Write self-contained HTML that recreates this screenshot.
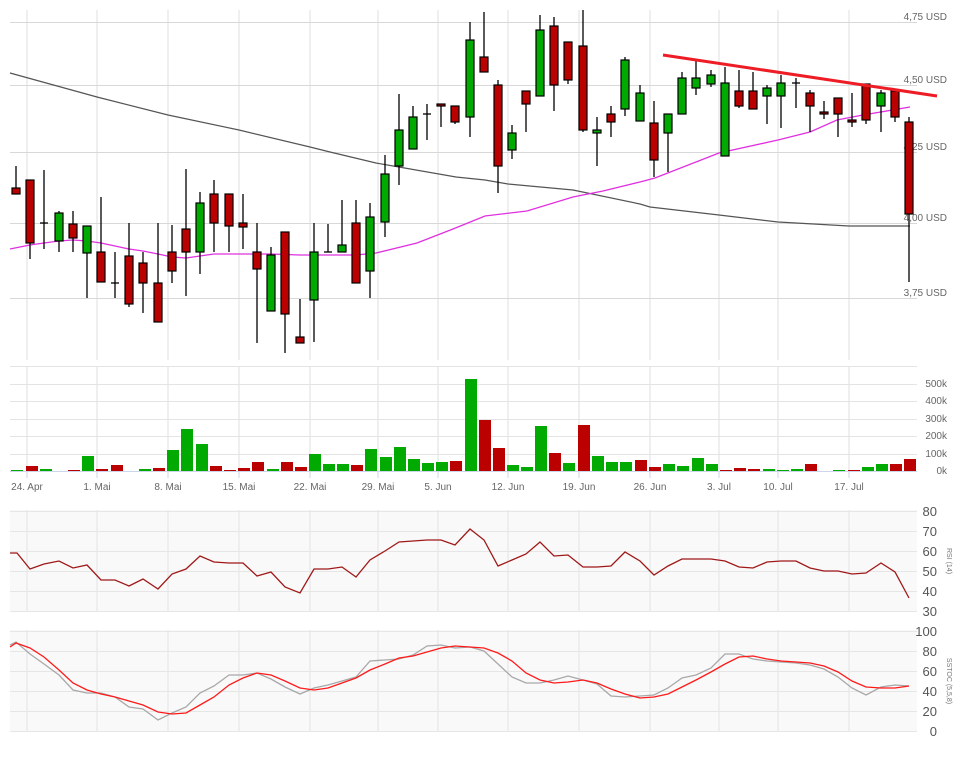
<!DOCTYPE html>
<html><head><meta charset="utf-8"><style>
html,body{margin:0;padding:0;background:#fff;}
svg{display:block;font-family:"Liberation Sans",sans-serif;}
</style></head><body>
<svg width="968" height="765" viewBox="0 0 968 765" xmlns="http://www.w3.org/2000/svg">
<!-- main panel grid -->
<g stroke="#efefef" stroke-width="2">
<line x1="27" y1="10" x2="27" y2="360"/><line x1="97" y1="10" x2="97" y2="360"/><line x1="168" y1="10" x2="168" y2="360"/><line x1="239" y1="10" x2="239" y2="360"/><line x1="310" y1="10" x2="310" y2="360"/><line x1="378" y1="10" x2="378" y2="360"/><line x1="438" y1="10" x2="438" y2="360"/><line x1="508" y1="10" x2="508" y2="360"/><line x1="579" y1="10" x2="579" y2="360"/><line x1="650" y1="10" x2="650" y2="360"/><line x1="719" y1="10" x2="719" y2="360"/><line x1="778" y1="10" x2="778" y2="360"/><line x1="849" y1="10" x2="849" y2="360"/>
</g>
<g stroke="#d8d8d8" stroke-width="1">
<line x1="10" y1="22.5" x2="917" y2="22.5"/><line x1="10" y1="85.5" x2="917" y2="85.5"/><line x1="10" y1="152.5" x2="917" y2="152.5"/><line x1="10" y1="223.5" x2="917" y2="223.5"/><line x1="10" y1="298.5" x2="917" y2="298.5"/>
</g>
<g font-size="10" fill="#666" text-anchor="end">
<text x="947" y="20">4,75 USD</text><text x="947" y="83">4,50 USD</text><text x="947" y="150">4,25 USD</text><text x="947" y="221">4,00 USD</text><text x="947" y="296">3,75 USD</text>
</g>
<!-- moving averages -->
<polyline fill="none" stroke="#555" stroke-width="1.2" points="10,73 97,97 168,115 239,130 310,147 330,152 376,163 456,177 485,180 508,184 573,190 640,204 650,207 719,215 778,222 849,226 910,226"/>
<polyline fill="none" stroke="#e030e0" stroke-width="1.3" points="10,249 30,245 44,243 59,241 73,240 87,241 101,243 115,246 129,249 143,251 158,254 172,257 186,258 200,256 214,254 243,254 271,254 300,255 328,255 356,255 376,253 417,243 453,229 485,216 527,211 573,197 603,191 640,182 655,178 719,153 778,140 810,132 837,120 863,115 910,107"/>
<!-- candles -->
<g stroke="#000" stroke-width="1.3">
<line x1="16" y1="166" x2="16" y2="194"/><line x1="30" y1="180" x2="30" y2="259"/><line x1="44" y1="170" x2="44" y2="249"/><line x1="59" y1="211" x2="59" y2="252"/><line x1="73" y1="211" x2="73" y2="252"/><line x1="87" y1="226" x2="87" y2="298"/><line x1="101" y1="197" x2="101" y2="282"/><line x1="115" y1="252" x2="115" y2="298"/><line x1="129" y1="223" x2="129" y2="307"/><line x1="143" y1="252" x2="143" y2="313"/><line x1="158" y1="223" x2="158" y2="322"/><line x1="172" y1="225" x2="172" y2="283"/><line x1="186" y1="169" x2="186" y2="296"/><line x1="200" y1="192" x2="200" y2="274"/><line x1="214" y1="180" x2="214" y2="252"/><line x1="229" y1="194" x2="229" y2="252"/><line x1="243" y1="194" x2="243" y2="249"/><line x1="257" y1="223" x2="257" y2="343"/><line x1="271" y1="247" x2="271" y2="311"/><line x1="285" y1="232" x2="285" y2="353"/><line x1="300" y1="299" x2="300" y2="343"/><line x1="314" y1="223" x2="314" y2="342"/><line x1="328" y1="224" x2="328" y2="252"/><line x1="342" y1="200" x2="342" y2="252"/><line x1="356" y1="200" x2="356" y2="283"/><line x1="370" y1="203" x2="370" y2="298"/><line x1="385" y1="155" x2="385" y2="237"/><line x1="399" y1="94" x2="399" y2="185"/><line x1="413" y1="106" x2="413" y2="149"/><line x1="427" y1="104" x2="427" y2="140"/><line x1="441" y1="104" x2="441" y2="127"/><line x1="455" y1="106" x2="455" y2="124"/><line x1="470" y1="22" x2="470" y2="137"/><line x1="484" y1="12" x2="484" y2="72"/><line x1="498" y1="80" x2="498" y2="193"/><line x1="512" y1="125" x2="512" y2="159"/><line x1="526" y1="91" x2="526" y2="132"/><line x1="540" y1="15" x2="540" y2="96"/><line x1="554" y1="17" x2="554" y2="111"/><line x1="568" y1="42" x2="568" y2="84"/><line x1="583" y1="10" x2="583" y2="132"/><line x1="597" y1="117" x2="597" y2="166"/><line x1="611" y1="106" x2="611" y2="137"/><line x1="625" y1="57" x2="625" y2="116"/><line x1="640" y1="85" x2="640" y2="121"/><line x1="654" y1="101" x2="654" y2="177"/><line x1="668" y1="114" x2="668" y2="172"/><line x1="682" y1="72" x2="682" y2="114"/><line x1="696" y1="61" x2="696" y2="95"/><line x1="711" y1="70" x2="711" y2="87"/><line x1="725" y1="67" x2="725" y2="156"/><line x1="739" y1="70" x2="739" y2="108"/><line x1="753" y1="72" x2="753" y2="109"/><line x1="767" y1="85" x2="767" y2="124"/><line x1="781" y1="75" x2="781" y2="128"/><line x1="796" y1="78" x2="796" y2="108"/><line x1="810" y1="90" x2="810" y2="132"/><line x1="824" y1="101" x2="824" y2="119"/><line x1="838" y1="98" x2="838" y2="137"/><line x1="852" y1="93" x2="852" y2="127"/><line x1="866" y1="84" x2="866" y2="124"/><line x1="881" y1="90" x2="881" y2="132"/><line x1="895" y1="91" x2="895" y2="122"/><line x1="909" y1="117" x2="909" y2="282"/>
<line x1="111" y1="283" x2="119" y2="283"/><line x1="40" y1="223" x2="48" y2="223"/><line x1="324" y1="252" x2="332" y2="252"/><line x1="423" y1="114" x2="431" y2="114"/><line x1="792" y1="83" x2="800" y2="83"/>
</g>
<g stroke="#000" stroke-width="1.2">
<g fill="#bb0000">
<rect x="12" y="188" width="8" height="6"/><rect x="26" y="180" width="8" height="63"/><rect x="69" y="224" width="8" height="14"/><rect x="97" y="252" width="8" height="30"/><rect x="125" y="256" width="8" height="48"/><rect x="139" y="263" width="8" height="20"/><rect x="154" y="283" width="8" height="39"/><rect x="168" y="252" width="8" height="19"/><rect x="182" y="229" width="8" height="23"/><rect x="210" y="194" width="8" height="29"/><rect x="225" y="194" width="8" height="32"/><rect x="239" y="223" width="8" height="4"/><rect x="253" y="252" width="8" height="17"/><rect x="281" y="232" width="8" height="82"/><rect x="296" y="337" width="8" height="6"/><rect x="352" y="223" width="8" height="60"/><rect x="437" y="104" width="8" height="2"/><rect x="451" y="106" width="8" height="16"/><rect x="480" y="57" width="8" height="15"/><rect x="494" y="85" width="8" height="81"/><rect x="522" y="91" width="8" height="13"/><rect x="550" y="26" width="8" height="59"/><rect x="564" y="42" width="8" height="38"/><rect x="579" y="46" width="8" height="84"/><rect x="607" y="114" width="8" height="8"/><rect x="650" y="123" width="8" height="37"/><rect x="735" y="91" width="8" height="15"/><rect x="749" y="91" width="8" height="18"/><rect x="806" y="93" width="8" height="13"/><rect x="820" y="112" width="8" height="2"/><rect x="834" y="98" width="8" height="16"/><rect x="848" y="120" width="8" height="2"/><rect x="862" y="84" width="8" height="36"/><rect x="891" y="91" width="8" height="26"/><rect x="905" y="122" width="8" height="92"/>
</g>
<g fill="#00aa00">
<rect x="55" y="213" width="8" height="28"/><rect x="83" y="226" width="8" height="27"/><rect x="196" y="203" width="8" height="49"/><rect x="267" y="255" width="8" height="56"/><rect x="310" y="252" width="8" height="48"/><rect x="338" y="245" width="8" height="7"/><rect x="366" y="217" width="8" height="54"/><rect x="381" y="174" width="8" height="48"/><rect x="395" y="130" width="8" height="36"/><rect x="409" y="117" width="8" height="32"/><rect x="466" y="40" width="8" height="77"/><rect x="508" y="133" width="8" height="17"/><rect x="536" y="30" width="8" height="66"/><rect x="593" y="130" width="8" height="3"/><rect x="621" y="60" width="8" height="49"/><rect x="636" y="93" width="8" height="28"/><rect x="664" y="114" width="8" height="19"/><rect x="678" y="78" width="8" height="36"/><rect x="692" y="78" width="8" height="10"/><rect x="707" y="75" width="8" height="9"/><rect x="721" y="83" width="8" height="73"/><rect x="763" y="88" width="8" height="8"/><rect x="777" y="83" width="8" height="13"/><rect x="877" y="93" width="8" height="13"/>
</g>
</g>
<line x1="663" y1="55" x2="937" y2="96" stroke="#ee1c25" stroke-width="3"/>
<!-- volume panel -->
<g stroke="#efefef" stroke-width="2">
<line x1="27" y1="366" x2="27" y2="471"/><line x1="97" y1="366" x2="97" y2="471"/><line x1="168" y1="366" x2="168" y2="471"/><line x1="239" y1="366" x2="239" y2="471"/><line x1="310" y1="366" x2="310" y2="471"/><line x1="378" y1="366" x2="378" y2="471"/><line x1="438" y1="366" x2="438" y2="471"/><line x1="508" y1="366" x2="508" y2="471"/><line x1="579" y1="366" x2="579" y2="471"/><line x1="650" y1="366" x2="650" y2="471"/><line x1="719" y1="366" x2="719" y2="471"/><line x1="778" y1="366" x2="778" y2="471"/><line x1="849" y1="366" x2="849" y2="471"/>
</g>
<g stroke="#e4e4e4" stroke-width="1">
<line x1="10" y1="366.5" x2="917" y2="366.5"/><line x1="10" y1="384.5" x2="917" y2="384.5"/><line x1="10" y1="401.5" x2="917" y2="401.5"/><line x1="10" y1="419.5" x2="917" y2="419.5"/><line x1="10" y1="436.5" x2="917" y2="436.5"/><line x1="10" y1="454.5" x2="917" y2="454.5"/>
</g>
<g fill="#00aa00">
<rect x="11" y="470" width="12" height="1"/><rect x="40" y="469" width="12" height="2"/><rect x="82" y="456" width="12" height="15"/><rect x="139" y="469" width="12" height="2"/><rect x="167" y="450" width="12" height="21"/><rect x="181" y="429" width="12" height="42"/><rect x="196" y="444" width="12" height="27"/><rect x="267" y="469" width="12" height="2"/><rect x="309" y="454" width="12" height="17"/><rect x="323" y="464" width="12" height="7"/><rect x="337" y="464" width="12" height="7"/><rect x="365" y="449" width="12" height="22"/><rect x="380" y="457" width="12" height="14"/><rect x="394" y="447" width="12" height="24"/><rect x="408" y="459" width="12" height="12"/><rect x="422" y="463" width="12" height="8"/><rect x="436" y="462" width="12" height="9"/><rect x="465" y="379" width="12" height="92"/><rect x="507" y="465" width="12" height="6"/><rect x="521" y="467" width="12" height="4"/><rect x="535" y="426" width="12" height="45"/><rect x="563" y="463" width="12" height="8"/><rect x="592" y="456" width="12" height="15"/><rect x="606" y="462" width="12" height="9"/><rect x="620" y="462" width="12" height="9"/><rect x="663" y="464" width="12" height="7"/><rect x="677" y="466" width="12" height="5"/><rect x="692" y="458" width="12" height="13"/><rect x="706" y="464" width="12" height="7"/><rect x="763" y="469" width="12" height="2"/><rect x="777" y="470" width="12" height="1"/><rect x="791" y="469" width="12" height="2"/><rect x="833" y="470" width="12" height="1"/><rect x="862" y="467" width="12" height="4"/><rect x="876" y="464" width="12" height="7"/>
</g>
<g fill="#bb0000">
<rect x="26" y="466" width="12" height="5"/><rect x="68" y="470" width="12" height="1"/><rect x="96" y="469" width="12" height="2"/><rect x="111" y="465" width="12" height="6"/><rect x="153" y="468" width="12" height="3"/><rect x="210" y="466" width="12" height="5"/><rect x="224" y="470" width="12" height="1"/><rect x="238" y="468" width="12" height="3"/><rect x="252" y="462" width="12" height="9"/><rect x="281" y="462" width="12" height="9"/><rect x="295" y="467" width="12" height="4"/><rect x="351" y="465" width="12" height="6"/><rect x="450" y="461" width="12" height="10"/><rect x="479" y="420" width="12" height="51"/><rect x="493" y="448" width="12" height="23"/><rect x="549" y="453" width="12" height="18"/><rect x="578" y="425" width="12" height="46"/><rect x="635" y="460" width="12" height="11"/><rect x="649" y="467" width="12" height="4"/><rect x="720" y="470" width="12" height="1"/><rect x="734" y="468" width="12" height="3"/><rect x="748" y="469" width="12" height="2"/><rect x="805" y="464" width="12" height="7"/><rect x="848" y="470" width="12" height="1"/><rect x="890" y="464" width="12" height="7"/><rect x="904" y="459" width="12" height="12"/>
</g>
<line x1="10" y1="471.5" x2="917" y2="471.5" stroke="#ccd6eb"/>
<g stroke="#ccd6eb"><line x1="27" y1="471" x2="27" y2="478"/><line x1="97" y1="471" x2="97" y2="478"/><line x1="168" y1="471" x2="168" y2="478"/><line x1="239" y1="471" x2="239" y2="478"/><line x1="310" y1="471" x2="310" y2="478"/><line x1="378" y1="471" x2="378" y2="478"/><line x1="438" y1="471" x2="438" y2="478"/><line x1="508" y1="471" x2="508" y2="478"/><line x1="579" y1="471" x2="579" y2="478"/><line x1="650" y1="471" x2="650" y2="478"/><line x1="719" y1="471" x2="719" y2="478"/><line x1="778" y1="471" x2="778" y2="478"/><line x1="849" y1="471" x2="849" y2="478"/></g>
<g font-size="10" fill="#666" text-anchor="end">
<text x="947" y="387">500k</text><text x="947" y="404">400k</text><text x="947" y="422">300k</text><text x="947" y="439">200k</text><text x="947" y="457">100k</text><text x="947" y="474">0k</text>
</g>
<g font-size="10" fill="#666" text-anchor="middle">
<text x="27" y="490">24. Apr</text><text x="97" y="490">1. Mai</text><text x="168" y="490">8. Mai</text><text x="239" y="490">15. Mai</text><text x="310" y="490">22. Mai</text><text x="378" y="490">29. Mai</text><text x="438" y="490">5. Jun</text><text x="508" y="490">12. Jun</text><text x="579" y="490">19. Jun</text><text x="650" y="490">26. Jun</text><text x="719" y="490">3. Jul</text><text x="778" y="490">10. Jul</text><text x="849" y="490">17. Jul</text>
</g>
<!-- RSI panel -->
<rect x="10" y="510" width="907" height="101" fill="#f9f9f9"/>
<rect x="10" y="630" width="907" height="101" fill="#f9f9f9"/>
<g stroke="#eeeeee" stroke-width="2">
<line x1="27" y1="510" x2="27" y2="611"/><line x1="97" y1="510" x2="97" y2="611"/><line x1="168" y1="510" x2="168" y2="611"/><line x1="239" y1="510" x2="239" y2="611"/><line x1="310" y1="510" x2="310" y2="611"/><line x1="378" y1="510" x2="378" y2="611"/><line x1="438" y1="510" x2="438" y2="611"/><line x1="508" y1="510" x2="508" y2="611"/><line x1="579" y1="510" x2="579" y2="611"/><line x1="650" y1="510" x2="650" y2="611"/><line x1="719" y1="510" x2="719" y2="611"/><line x1="778" y1="510" x2="778" y2="611"/><line x1="849" y1="510" x2="849" y2="611"/>
<line x1="27" y1="630" x2="27" y2="731"/><line x1="97" y1="630" x2="97" y2="731"/><line x1="168" y1="630" x2="168" y2="731"/><line x1="239" y1="630" x2="239" y2="731"/><line x1="310" y1="630" x2="310" y2="731"/><line x1="378" y1="630" x2="378" y2="731"/><line x1="438" y1="630" x2="438" y2="731"/><line x1="508" y1="630" x2="508" y2="731"/><line x1="579" y1="630" x2="579" y2="731"/><line x1="650" y1="630" x2="650" y2="731"/><line x1="719" y1="630" x2="719" y2="731"/><line x1="778" y1="630" x2="778" y2="731"/><line x1="849" y1="630" x2="849" y2="731"/>
</g>
<g stroke="#e6e6e6" stroke-width="1">
<line x1="10" y1="511.5" x2="917" y2="511.5"/><line x1="10" y1="531.5" x2="917" y2="531.5"/><line x1="10" y1="551.5" x2="917" y2="551.5"/><line x1="10" y1="571.5" x2="917" y2="571.5"/><line x1="10" y1="591.5" x2="917" y2="591.5"/><line x1="10" y1="611.5" x2="917" y2="611.5"/>
<line x1="10" y1="631.5" x2="917" y2="631.5"/><line x1="10" y1="651.5" x2="917" y2="651.5"/><line x1="10" y1="671.5" x2="917" y2="671.5"/><line x1="10" y1="691.5" x2="917" y2="691.5"/><line x1="10" y1="711.5" x2="917" y2="711.5"/><line x1="10" y1="731.5" x2="917" y2="731.5"/>
</g>
<polyline fill="none" stroke="#a01818" stroke-width="1.3" points="10,553 17,553 30,569 44,564 59,561 73,568 87,565 101,580 115,580 129,586 143,579 158,589 172,574 186,569 200,556 214,562 229,563 243,563 257,576 271,572 285,587 300,593 314,569 328,569 342,567 356,577 370,560 385,551 399,542 413,541 427,540 441,540 455,545 470,529 484,540 498,566 512,560 526,554 540,542 554,556 568,555 583,567 597,567 611,566 625,552 640,561 654,575 668,566 682,559 696,559 711,559 725,561 739,567 753,568 767,562 781,561 796,561 810,568 824,571 838,571 852,574 866,573 881,563 895,572 909,598"/>
<polyline fill="none" stroke="#a8a8a8" stroke-width="1.3" points="10,645 16,642 30,654 44,664 59,675 73,690 87,693 101,693 115,697 129,707 143,709 158,720 172,713 186,707 200,693 214,686 229,675 243,675 257,673 271,679 285,687 300,694 314,688 328,685 342,681 356,677 370,661 385,660 399,659 413,655 427,646 441,645 455,648 470,647 484,651 498,664 512,677 526,683 540,683 554,680 568,676 583,680 597,684 611,696 625,697 640,696 654,695 668,688 682,678 696,675 711,668 725,654 739,654 753,659 767,661 781,662 796,663 810,665 824,669 838,677 852,688 866,695 881,687 895,685 909,686"/>
<polyline fill="none" stroke="#ff1a1a" stroke-width="1.3" points="10,647 16,643 30,648 44,657 59,670 73,683 87,690 101,694 115,697 129,701 143,705 158,712 172,714 186,713 200,705 214,697 229,685 243,678 257,673 271,675 285,681 300,688 314,690 328,688 342,683 356,678 370,670 385,664 399,658 413,656 427,652 441,648 455,646 470,647 484,648 498,653 512,661 526,673 540,680 554,683 568,682 583,680 597,683 611,689 625,694 640,698 654,697 668,694 682,687 696,680 711,672 725,664 739,657 753,656 767,659 781,661 796,662 810,663 824,666 838,672 852,681 866,687 881,688 895,688 909,686"/>
<g font-size="13" fill="#555" text-anchor="end">
<text x="937" y="516">80</text><text x="937" y="536">70</text><text x="937" y="556">60</text><text x="937" y="576">50</text><text x="937" y="596">40</text><text x="937" y="616">30</text>
<text x="937" y="636">100</text><text x="937" y="656">80</text><text x="937" y="676">60</text><text x="937" y="696">40</text><text x="937" y="716">20</text><text x="937" y="736">0</text>
</g>
<g font-size="7" fill="#777" text-anchor="middle">
<text transform="translate(947,561) rotate(90)">RSI (14)</text>
<text transform="translate(947,681) rotate(90)">SSTOC (5,5,8)</text>
</g>
</svg>
</body></html>
